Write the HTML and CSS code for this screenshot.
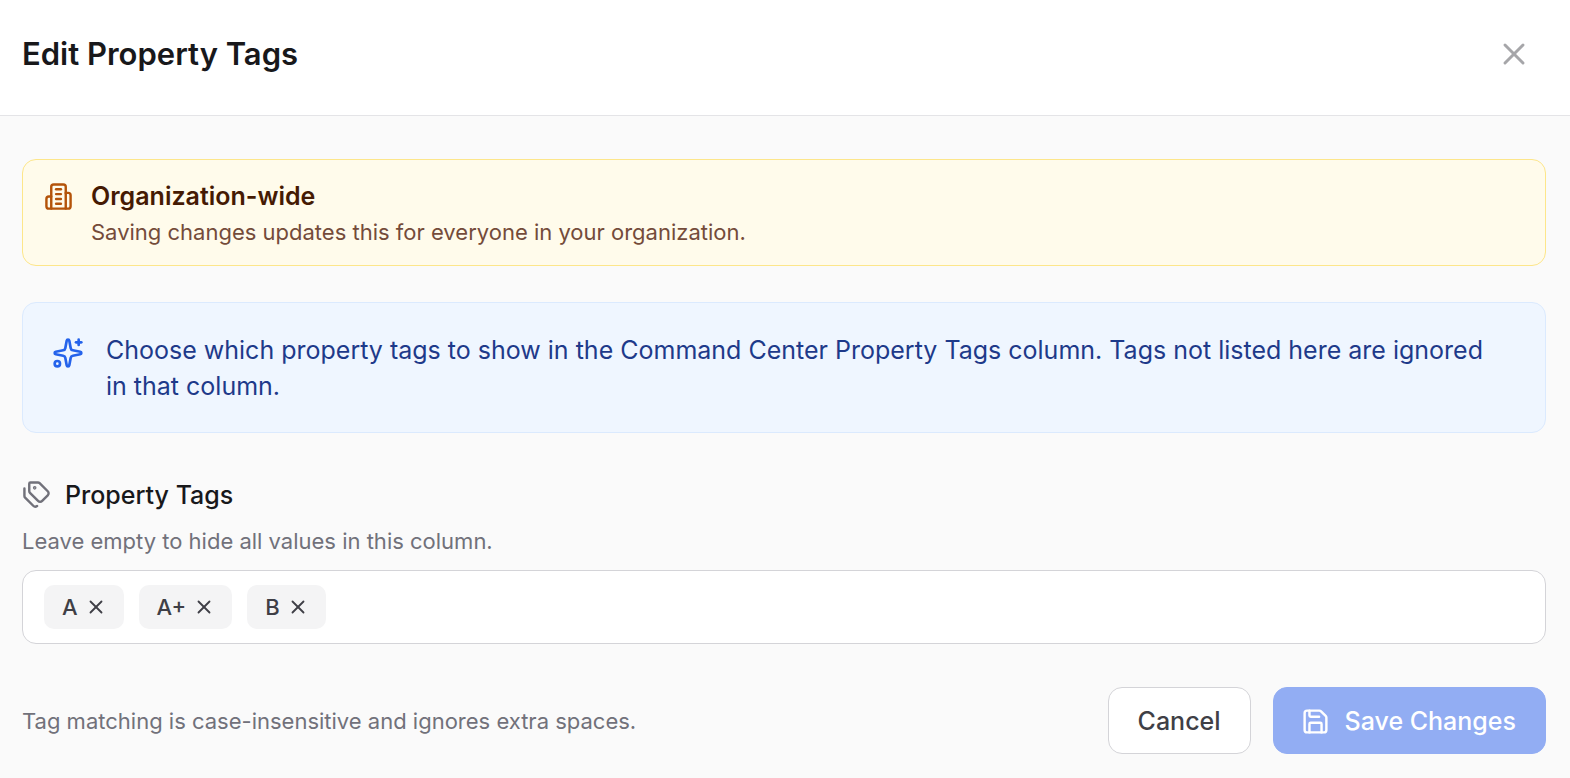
FILE: index.html
```html
<!DOCTYPE html>
<html lang="en">
<head>
    <meta charset="UTF-8">
    <meta name="viewport" content="width=device-width, initial-scale=1.0">
    <title>Edit Property Tags</title>
    <link rel="stylesheet" href="styles.css">
</head>
<body>

<header class="modal-header">
    <h1>Edit Property Tags</h1>
    <button class="close-button" type="button" aria-label="Close">
        <svg class="icon icon-close" viewBox="0 0 24 24"><path d="M18 6 6 18"/><path d="m6 6 12 12"/></svg>
    </button>
</header>

<form class="modal-body">
    <section class="notice notice-org">
        <svg class="icon icon-small" viewBox="0 0 24 24">
            <path d="M6 22V4a2 2 0 0 1 2-2h8a2 2 0 0 1 2 2v18Z"/>
            <path d="M6 12H4a2 2 0 0 0-2 2v6a2 2 0 0 0 2 2h2"/>
            <path d="M18 9h2a2 2 0 0 1 2 2v9a2 2 0 0 1-2 2h-2"/>
            <path d="M10 6h4"/><path d="M10 10h4"/><path d="M10 14h4"/><path d="M10 18h4"/>
        </svg>
        <div>
            <h2>Organization-wide</h2>
            <p>Saving changes updates this for everyone in your organization.</p>
        </div>
    </section>

    <section class="notice notice-info">
        <svg class="icon icon-sparkles" viewBox="0 0 24 24">
            <path d="M11.017 2.814a1 1 0 0 1 1.966 0l1.051 5.558a2 2 0 0 0 1.594 1.594l5.558 1.051a1 1 0 0 1 0 1.966l-5.558 1.051a2 2 0 0 0-1.594 1.594l-1.051 5.558a1 1 0 0 1-1.966 0l-1.051-5.558a2 2 0 0 0-1.594-1.594l-5.558-1.051a1 1 0 0 1 0-1.966l5.558-1.051a2 2 0 0 0 1.594-1.594z"/>
            <path d="M20 2v4"/><path d="M22 4h-4"/>
            <circle cx="4" cy="20" r="2"/>
        </svg>
        <p>Choose which property tags to show in the Command Center Property Tags column. Tags not listed here are ignored in that column.</p>
    </section>

    <div class="field">
        <label class="field-label" for="tag-input">
            <svg class="icon icon-small" viewBox="0 0 24 24">
                <path d="M13.172 2a2 2 0 0 1 1.414.586l6.71 6.71a2.4 2.4 0 0 1 0 3.408l-4.592 4.592a2.4 2.4 0 0 1-3.408 0l-6.71-6.71A2 2 0 0 1 6 9.172V3a1 1 0 0 1 1-1z"/>
                <path d="M2 7v6.172a2 2 0 0 0 .586 1.414l6.71 6.71a2.4 2.4 0 0 0 3.191.193"/>
                <circle cx="10.5" cy="6.5" r=".5" fill="currentColor"/>
            </svg>
            Property Tags
        </label>
        <p class="hint" id="tag-hint">Leave empty to hide all values in this column.</p>
        <div class="tag-box">
            <span class="tag">A
                <button type="button" aria-label="Remove A"><svg class="icon icon-remove" viewBox="0 0 24 24"><path d="M18 6 6 18"/><path d="m6 6 12 12"/></svg></button>
            </span>
            <span class="tag">A+
                <button type="button" aria-label="Remove A+"><svg class="icon icon-remove" viewBox="0 0 24 24"><path d="M18 6 6 18"/><path d="m6 6 12 12"/></svg></button>
            </span>
            <span class="tag">B
                <button type="button" aria-label="Remove B"><svg class="icon icon-remove" viewBox="0 0 24 24"><path d="M18 6 6 18"/><path d="m6 6 12 12"/></svg></button>
            </span>
            <input type="text" id="tag-input" aria-describedby="tag-hint">
        </div>
    </div>

    <footer class="modal-footer">
        <p class="hint">Tag matching is case-insensitive and ignores extra spaces.</p>
        <div class="actions">
            <button class="button button-cancel" type="button">Cancel</button>
            <button class="button button-save" type="submit" disabled>
                <svg class="icon icon-small" viewBox="0 0 24 24">
                    <path d="M15.2 3a2 2 0 0 1 1.4.6l3.8 3.8a2 2 0 0 1 .6 1.4V19a2 2 0 0 1-2 2H5a2 2 0 0 1-2-2V5a2 2 0 0 1 2-2z"/>
                    <path d="M17 21v-7a1 1 0 0 0-1-1H8a1 1 0 0 0-1 1v7"/>
                    <path d="M7 3v4a1 1 0 0 0 1 1h7"/>
                </svg>
                Save Changes
            </button>
        </div>
    </footer>
</form>

</body>
</html>
```
FILE: styles.css
```css
* {
    box-sizing: border-box;
}

body {
    margin: 0;
    background-color: #fafafa;
    color: #18181b;
    font-family: Inter, sans-serif;
    font-size: 25px;
    line-height: 36px;
}

h1, h2, p {
    margin: 0;
}

button, input {
    font: inherit;
    color: inherit;
}

.icon {
    display: block;
    flex-shrink: 0;
    fill: none;
    stroke: currentColor;
    stroke-width: 2;
    stroke-linecap: round;
    stroke-linejoin: round;
}

.icon-small {
    width: 29px;
    height: 29px;
}

.icon-sparkles {
    width: 32px;
    height: 32px;
    margin-top: 5px;
}

.icon-close {
    width: 36px;
    height: 36px;
}

.icon-remove {
    width: 22px;
    height: 22px;
}

/* header */
.modal-header {
    display: flex;
    align-items: center;
    justify-content: space-between;
    padding: 32px 38px 39px 22px;
    background-color: #fff;
    border-bottom: 1px solid #e4e4e7;
}

h1 {
    font-size: 31px;
    line-height: 44px;
    font-weight: 600;
}

.close-button {
    padding: 0;
    border: none;
    background: none;
    color: #a6a6a9;
    cursor: pointer;
}

/* body */
.modal-body {
    display: flex;
    flex-direction: column;
    gap: 36px;
    padding: 43px 24px 24px 22px;
}

.notice {
    display: flex;
    border: 1px solid;
    border-radius: 14px;
}

.notice-org {
    gap: 18px;
    padding: 18px 21px 17px;
    border-color: #fde68a;
    background-color: #fffbeb;
    color: #b45309;
}

.notice-org .icon {
    margin-top: 4px;
}

.notice-org h2 {
    color: #451a03;
    font-size: 25px;
    line-height: 36px;
    font-weight: 600;
}

.notice-org p {
    margin-top: 2px;
    color: #744b3a;
    font-size: 22px;
    line-height: 32px;
}

.notice-info {
    gap: 22px;
    padding: 29px 43px 28px 29px;
    border-color: #dbeafe;
    background-color: #eff6ff;
    color: #2563eb;
}

.notice-info p {
    color: #1e3a8a;
}

.field {
    padding-top: 8px;
}

.field-label {
    display: flex;
    align-items: center;
    gap: 14px;
    font-weight: 500;
}

.field-label .icon {
    margin-bottom: 2px;
    color: #71717a;
}

.hint {
    color: #71717a;
    font-size: 22px;
    line-height: 36px;
}

.field .hint {
    margin: 10px 0 11px;
}

.tag-box {
    display: flex;
    flex-wrap: wrap;
    align-items: center;
    gap: 15px;
    padding: 14px 21px;
    border: 1px solid #d4d4d8;
    border-radius: 14px;
    background-color: #fff;
}

.tag {
    display: flex;
    align-items: center;
    gap: 7px;
    padding: 4px 17px 4px 18px;
    border-radius: 10px;
    background-color: #f4f4f5;
    color: #3f3f46;
    font-size: 22px;
    font-weight: 500;
}

.tag button {
    padding: 0;
    border: none;
    background: none;
    cursor: pointer;
}

.tag-box input {
    flex: 1;
    min-width: 100px;
    height: 44px;
    padding: 0;
    border: none;
    outline: none;
    background: none;
}

/* footer */
.modal-footer {
    display: flex;
    align-items: center;
    justify-content: space-between;
    padding-top: 7px;
}

.actions {
    display: flex;
    gap: 22px;
}

.button {
    display: flex;
    align-items: center;
    gap: 15px;
    padding: 15px 29px 14px;
    border: 1px solid #d4d4d8;
    border-radius: 14px;
    background-color: #fff;
    color: #3f3f46;
    font-weight: 500;
    cursor: pointer;
}

.button-save {
    padding-left: 27px;
    border-color: #92adf3;
    background-color: #92adf3;
    color: #fff;
    cursor: default;
}
```
